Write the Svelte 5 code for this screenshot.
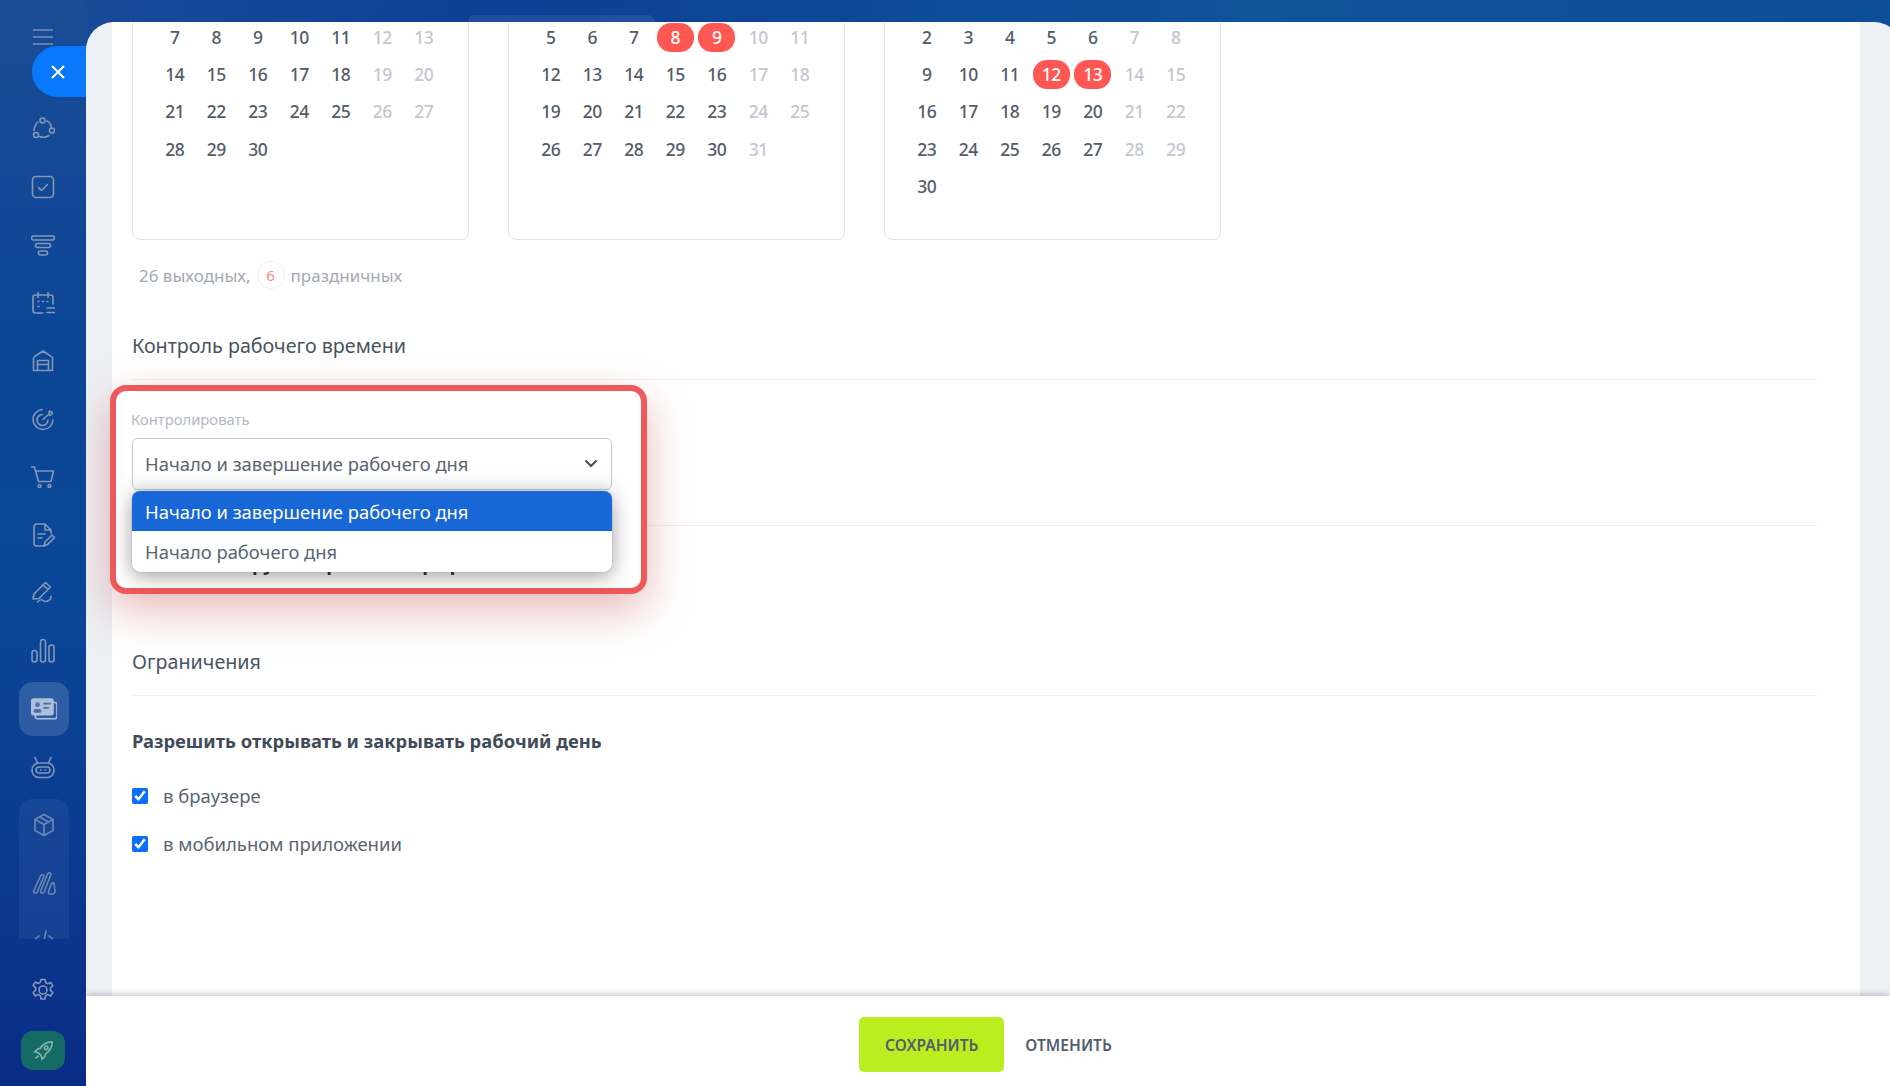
<script lang="ts">
  const months = [
    {
      rows: [
        [7, 8, 9, 10, 11, 12, 13],
        [14, 15, 16, 17, 18, 19, 20],
        [21, 22, 23, 24, 25, 26, 27],
        [28, 29, 30]
      ],
      red: [] as number[]
    },
    {
      rows: [
        [5, 6, 7, 8, 9, 10, 11],
        [12, 13, 14, 15, 16, 17, 18],
        [19, 20, 21, 22, 23, 24, 25],
        [26, 27, 28, 29, 30, 31]
      ],
      red: [8, 9]
    },
    {
      rows: [
        [2, 3, 4, 5, 6, 7, 8],
        [9, 10, 11, 12, 13, 14, 15],
        [16, 17, 18, 19, 20, 21, 22],
        [23, 24, 25, 26, 27, 28, 29],
        [30]
      ],
      red: [12, 13]
    }
  ];
</script>

<div class="page">
  <aside class="side">
    <div class="burger"><i></i><i></i><i></i></div>
    <div class="close">
      <svg width="16" height="16" viewBox="0 0 16 16"><path d="M2 2l12 12M14 2L2 14" stroke="#fff" stroke-width="2" fill="none" /></svg>
    </div>
    <div class="icons">
      <div class="ic"><svg viewBox="0 0 24 24"><circle cx="11.500" cy="3.500" r="2.500" /><circle cx="21" cy="13.500" r="2.500" /><circle cx="5" cy="18" r="2.500" /><path d="M3 13.500Q3.500 8 7 5M16 4q3.500 1.500 4.300 6M8.500 19.500q5 2 9.500-1" /></svg></div>
      <div class="ic"><svg viewBox="0 0 24 24"><rect x="1.500" y="1.500" width="21" height="21" rx="3.500" /><path d="M7.500 12.500l3 3 6-6" /></svg></div>
      <div class="ic"><svg viewBox="0 0 24 24"><rect x="0.500" y="3" width="23" height="4" rx="2" /><rect x="4.500" y="10.500" width="15" height="4" rx="2" /><rect x="7.500" y="18" width="9" height="4" rx="2" /></svg></div>
      <div class="ic"><svg viewBox="0 0 24 24"><path d="M12 22H4.500Q2 22 2 19.500V6.500Q2 4 4.500 4h15Q22 4 22 6.500V13M7 1.500v5M17 1.500v5M16 17h8M16 21.500h8M7 10.500h1M11.500 10.500h1M16 10.500h1M7 15.500h1" /></svg></div>
      <div class="ic"><svg viewBox="0 0 24 24"><path d="M2.500 21.500V9.500q0-1 1-1.800L12 2l8.500 5.700q1 .8 1 1.800v12zM6.500 21.500v-10h11v10M6.500 15.500h11" /></svg></div>
      <div class="ic"><svg viewBox="0 0 24 24"><path d="M11 2.500A10 10 0 1 0 22 13M11.500 7.500A5.500 5.500 0 1 0 17 13M12 12.500L18 7M18 7l.5-3 2 1 1 1.500-2.500 2z" /></svg></div>
      <div class="ic"><svg viewBox="0 0 24 24"><path d="M0 2h3.500l4 14.500H20L22.500 6H5" /><circle cx="8.500" cy="21" r="1.500" /><circle cx="18.500" cy="21" r="1.500" /></svg></div>
      <div class="ic"><svg viewBox="0 0 24 24"><path d="M12 23H6q-3 0-3-3V4q0-3 3-3h8l6 6v3M14 1v6h6M7 11h7M7 15h4M13 23l1-4 7-7 2.500 2.500-7 7z" /></svg></div>
      <div class="ic"><svg viewBox="0 0 24 24"><path d="M2 18l1-5L14.500 1.500l5 4.500L8 17.500zM12 4l5 4.500M6.500 21q3-3.500 5.500-1.500t5.500 0q2.500-1 2.500-4" /></svg></div>
      <div class="ic"><svg viewBox="0 0 24 24"><rect x="1" y="11.500" width="5" height="11.500" rx="2.500" /><rect x="9.500" y="0.500" width="5" height="22.500" rx="2.500" /><rect x="18" y="6" width="5" height="17" rx="2.500" /></svg></div>
      <div class="ic active"><svg viewBox="0 0 24 24" class="filled"><rect x="4" y="6" width="20" height="15" rx="2" fill="none" stroke="#aebfd8" stroke-width="1.500" /><rect x="0" y="2" width="21" height="16" rx="2.500" fill="#aebfd8" /><circle cx="6" cy="8" r="2.200" fill="#4a6fb3" /><rect x="2.500" y="12" width="7" height="3.500" rx="1.500" fill="#4a6fb3" /><path d="M12 7h6M12 11h4" stroke="#4a6fb3" stroke-width="1.600" /></svg></div>
      <div class="ic"><svg viewBox="0 0 24 24"><rect x="1" y="8" width="22" height="14.500" rx="7" /><rect x="5" y="12" width="14" height="6" rx="3" /><path d="M6.500 8L4 2.500M17.500 8L20 2.500" /><path d="M9.500 15h.5M14 15h.5" /></svg></div>
      <div class="group">
        <div class="ic"><svg viewBox="0 0 24 24"><path d="M12 1.500l9 5v11l-9 5-9-5v-11zM3 6.500l9 5 9-5M12 11.500v11M7.500 4l9 5" /></svg></div>
        <div class="ic"><svg viewBox="0 0 24 24"><path d="M1.500 20.500L8.500 5q2.500-3 3.500 0L5 21.500q-2.500 2-3.500-1zM8.500 20.500L15.500 3q2.500-2.500 3.500 0L12 21.500q-2.500 2-3.500-1zM16.500 20.500l3-8q1.500-1.500 2.500 0l1 8q-.5 2.500-3 2.500h-2.500q-1.500 0-1-2.500z" /></svg></div>
        <div class="ic"><svg viewBox="0 0 24 24"><path d="M7 7l-6 5 6 5M17 7l6 5-6 5M14 2l-4 20" /></svg></div>
      </div>
    </div>
    <div class="bottom">
      <div class="ic"><svg viewBox="0 0 24 24"><circle cx="12" cy="12" r="4" /><path d="M10 1.500h4l.7 3.200 2.100 1 3-1.300 2 3.400-2.400 2.200v2.300l2.400 2.200-2 3.400-3-1.300-2.100 1-.7 3.400h-4l-.7-3.400-2.100-1-3 1.300-2-3.400 2.400-2.200V9.700L2.200 7.500l2-3.400 3 1.300 2.100-1z" /></svg></div>
      <div class="rocket"><svg viewBox="0 0 24 24" width="22" height="22"><path d="M22 2q-9 0-13 7l-3 1-3 3 4 1 3 3 1 4 3-3 1-3q7-4 7-13zM7 17l-3 3" /><circle cx="15.500" cy="8.500" r="2" /></svg></div>
    </div>
  </aside>

  <main class="panel">
    <div class="sheet">
      <div class="months">
        {#each months as m}
          <div class="card">
            {#each m.rows as row}
              <div class="week">
                {#each row as d, i}
                  <span class="day" class:off={i > 4} class:red={m.red.includes(d)}>{d}</span>
                {/each}
              </div>
            {/each}
          </div>
        {/each}
      </div>

      <div class="summary">
        26 выходных, <span class="badge">6</span> праздничных
      </div>

      <h3 class="title first">Контроль рабочего времени</h3>
      <div class="field"></div>

      <h3 class="title second">Ограничения</h3>
      <div class="strong">Разрешить открывать и закрывать рабочий день</div>
      <label class="check one"><input type="checkbox" checked /> в браузере</label>
      <label class="check"><input type="checkbox" checked /> в мобильном приложении</label>
    </div>

    <div class="focus">
      <div class="flabel">Контролировать</div>
      <div class="fselect">
        Начало и завершение рабочего дня
        <svg width="16" height="16" viewBox="0 0 16 16"><path d="M2.500 5.500L8 11l5.500-5.500" fill="none" stroke="#47505e" stroke-width="2.200" /></svg>
      </div>
      <div class="under"><span>Показывать ручной рабочий график</span></div>
      <div class="list">
        <div class="opt sel">Начало и завершение рабочего дня</div>
        <div class="opt">Начало рабочего дня</div>
      </div>
    </div>

    <footer class="foot">
      <button type="button" class="save">СОХРАНИТЬ</button>
      <button type="button" class="cancel">ОТМЕНИТЬ</button>
    </footer>
  </main>
  <div class="tab"></div>
</div>

<style>
  :global(body) {
    margin: 0;
    overflow: hidden;
  }
  .page {
    position: relative;
    display: flex;
    width: 1890px;
    height: 1086px;
    overflow: hidden;
    font-family: 'Noto Sans', 'Open Sans', sans-serif;
    color: #5a6472;
    background: linear-gradient(100deg, #1a4c98 0%, #0c4096 25%, #0f5399 60%, #0c4d96 100%);
  }
  .side {
    width: 86px;
    flex: none;
    display: flex;
    flex-direction: column;
    background: linear-gradient(180deg, #1c4c96 0%, #0b4695 30%, #0a4697 55%, #0a3a90 80%, #0a2c86 100%);
  }
  .burger {
    display: flex;
    flex-direction: column;
    gap: 5.500px;
    width: 20px;
    margin: 29px 0 0 33px;
    height: 17px;
  }
  .burger i {
    height: 1.500px;
    background: #7f93b4;
    opacity: 0.7;
  }
  .close {
    width: 54px;
    height: 51px;
    margin: 0 0 0 32px;
    background: #0a78fb;
    border-radius: 26px 0 0 26px;
    display: flex;
    align-items: center;
    justify-content: center;
    padding-right: 3px;
    box-sizing: border-box;
  }
  .icons {
    display: flex;
    flex-direction: column;
    margin-top: 3px;
  }
  .ic {
    height: 58px;
    display: flex;
    align-items: center;
    justify-content: center;
  }
  .ic svg {
    width: 24px;
    height: 24px;
    fill: none;
    stroke: #8497b6;
    stroke-width: 1.600;
    stroke-linecap: round;
    stroke-linejoin: round;
  }
  .ic svg.filled {
    stroke: none;
    width: 26px;
    height: 26px;
  }
  .ic.active {
    width: 50px;
    height: 54px;
    margin: 2px 0 2px 19px;
    background: rgba(255, 255, 255, 0.15);
    border-radius: 14px;
  }
  .group {
    width: 50px;
    height: 140px;
    margin: 3px 0 0 19px;
    overflow: hidden;
    background: rgba(255, 255, 255, 0.05);
    border-radius: 14px 14px 0 0;
  }
  .group .ic {
    height: 58px;
  }
  .group .ic:first-child {
    margin-top: -3px;
  }
  .group .ic svg {
    stroke: #6b88b4;
  }
  .bottom {
    margin-top: 22px;
  }
  .rocket {
    width: 44px;
    height: 39px;
    margin: 12px 0 0 21px;
    background: #146a64;
    border-radius: 12px;
    display: flex;
    align-items: center;
    justify-content: center;
  }
  .rocket svg {
    fill: none;
    stroke: #7fb3aa;
    stroke-width: 1.800;
  }
  .panel {
    position: relative;
    flex: 1;
    margin-top: 22px;
    margin-right: -12px;
    background: #edf0f4;
    border-radius: 28px 28px 0 0;
    overflow: hidden;
  }
  .sheet {
    width: 1748px;
    height: 974px;
    margin-left: 26px;
    padding: 0 43px 0 20px;
    box-sizing: border-box;
    background: #fff;
    overflow: hidden;
  }
  .months {
    display: flex;
    gap: 39.500px;
    margin-top: -20px;
  }
  .card {
    width: 336.500px;
    height: 238px;
    box-sizing: border-box;
    padding: 16px 0 0 21px;
    border: 1px solid #dfe3e8;
    border-radius: 8px;
  }
  .week {
    display: flex;
    height: 37.200px;
    align-items: center;
  }
  .day {
    width: 41.500px;
    flex: none;
    text-align: center;
    font-size: 17.500px;
    font-weight: 500;
    letter-spacing: -0.400px;
    color: #535c68;
    line-height: 29px;
    position: relative;
  }
  .day.off {
    color: #c3c7cd;
  }
  .day.red {
    color: #fff;
    background: #ff5752;
    border-radius: 14px;
    width: 37px;
    margin: 0 2.250px;
  }
  .summary {
    margin: 19px 0 0 7px;
    height: 32px;
    display: flex;
    align-items: center;
    gap: 6px;
    font-size: 17px;
    color: #a4a9b1;
  }
  .badge {
    width: 28px;
    height: 28px;
    box-sizing: border-box;
    border: 1px solid #eef0f2;
    border-radius: 50%;
    text-align: center;
    line-height: 26px;
    font-size: 15px;
    color: #f98a8a;
  }
  .title {
    margin: 0;
    font-size: 19.700px;
    font-weight: 400;
    color: #4a5360;
    border-bottom: 1px solid #eef0f2;
  }
  .title.first {
    margin-top: 39px;
    height: 50px;
    line-height: 32px;
    box-sizing: border-box;
  }
  .field {
    height: 146px;
    border-bottom: 1px solid #eef0f2;
    box-sizing: border-box;
  }
  .title.second {
    margin-top: 120px;
    height: 50px;
    line-height: 32px;
    box-sizing: border-box;
  }
  .strong {
    margin-top: 30px;
    font-size: 18.400px;
    font-weight: 700;
    line-height: 30px;
    color: #414b58;
  }
  .check {
    display: flex;
    align-items: center;
    gap: 15px;
    margin-top: 18px;
    font-size: 18.500px;
    line-height: 30px;
    color: #5a6472;
  }
  .check.one {
    margin-top: 25px;
  }
  .check input {
    width: 16px;
    height: 16px;
    margin: 0;
    accent-color: #0a6ffd;
  }
  .focus {
    position: absolute;
    left: 24px;
    top: 363px;
    width: 537px;
    height: 209px;
    box-sizing: border-box;
    border: 6px solid #ee5a5c;
    border-radius: 16px;
    background: #fff;
    box-shadow: 0 16px 44px rgba(190, 60, 60, 0.36);
  }
  .flabel {
    position: absolute;
    left: 15px;
    top: 18px;
    font-size: 14.800px;
    line-height: 20px;
    color: #b4b9c1;
  }
  .fselect {
    position: absolute;
    left: 16px;
    top: 47px;
    width: 480px;
    height: 52px;
    box-sizing: border-box;
    padding: 0 12px 2px;
    display: flex;
    align-items: center;
    justify-content: space-between;
    border: 1px solid #c6cad1;
    border-radius: 5px;
    font-size: 18.400px;
    color: #5a6472;
    background: linear-gradient(180deg, #fff 60%, #f7f8f9 100%);
  }
  .under {
    position: absolute;
    left: 16px;
    top: 181px;
    height: 5px;
    overflow: hidden;
    font-size: 18.500px;
    font-weight: 700;
    line-height: 26px;
    white-space: nowrap;
    color: #2f3742;
  }
  .under span {
    display: block;
    margin-top: -21px;
  }
  .list {
    position: absolute;
    left: 16px;
    top: 100px;
    width: 480px;
    border-radius: 8px;
    overflow: hidden;
    background: #fff;
    box-shadow: 0 4px 20px rgba(0, 0, 0, 0.38), 0 0 1px rgba(0, 0, 0, 0.5);
  }
  .opt {
    height: 40px;
    line-height: 42px;
    padding: 0 13px;
    font-size: 18.400px;
    color: #5a6472;
  }
  .opt + .opt {
    height: 41px;
  }
  .opt.sel {
    background: #1867d6;
    color: #fff;
  }
  .foot {
    position: absolute;
    left: 0;
    right: 12px;
    bottom: 0;
    height: 90px;
    background: #fff;
    box-shadow: 0 -2px 6px rgba(60, 70, 85, 0.28);
    display: flex;
    justify-content: center;
    align-items: flex-start;
    padding: 21px 5px 0 0;
    box-sizing: border-box;
    gap: 21px;
  }
  .foot button {
    font-family: inherit;
    font-size: 15.600px;
    font-weight: 600;
    color: #525e6e;
    border: 0;
    background: none;
    padding: 0;
    height: 55px;
    cursor: pointer;
  }
  .foot .save {
    width: 145px;
    background: #bbee1e;
    border-radius: 5px;
  }
  .tab {
    position: absolute;
    left: 468px;
    top: 15px;
    width: 187px;
    height: 7px;
    background: rgba(255, 255, 255, 0.08);
    border-radius: 8px 8px 0 0;
  }
</style>
